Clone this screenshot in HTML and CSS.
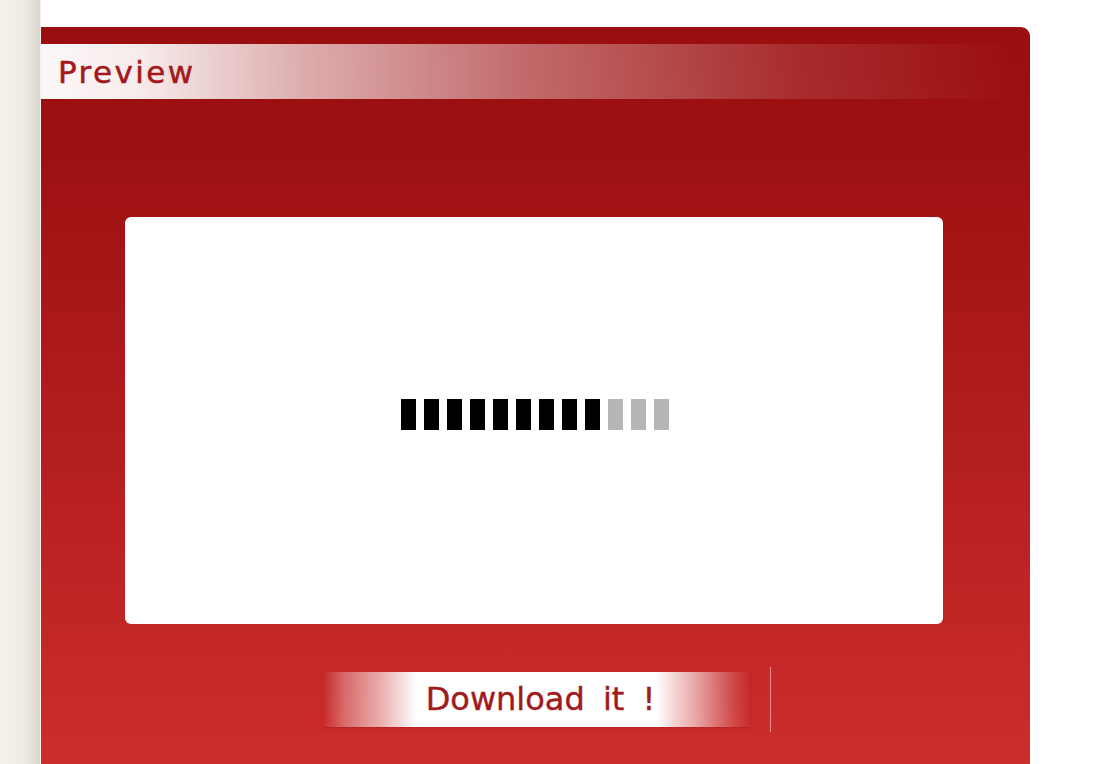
FILE: index.html
```html
<!DOCTYPE html>
<html lang="en">
<head>
<meta charset="UTF-8">
<meta name="viewport" content="width=device-width, initial-scale=1.0">
<title>Preview</title>
<link rel="stylesheet" href="styles.css">
</head>
<body>
<div class="side"></div>
<div class="panel">
  <div class="panel-title">Preview</div>

  <div class="preview-box">
    <div class="loader">
      <span class="on"></span><span class="on"></span><span class="on"></span>
      <span class="on"></span><span class="on"></span><span class="on"></span>
      <span class="on"></span><span class="on"></span><span class="on"></span>
      <span></span><span></span><span></span>
    </div>
  </div>

  <div class="download-row">
    <a class="download" href="#">Download it !</a>
    <span class="divider"></span>
  </div>
</div>
</body>
</html>
```

FILE: styles.css
```css
html, body { margin: 0; padding: 0; height: 764px; overflow: hidden; }
body {
  display: flex;
  background: #fff;
  font-family: "DejaVu Sans", "Liberation Sans", sans-serif;
}
.side {
  width: 40px;
  height: 764px;
  background: linear-gradient(to right, #f3f1ea, #eeebe3 60%, #d9d6ce);
  border-right: 1px solid #f4f2ee;
}
.panel {
  width: 989px;
  height: 737px;
  margin-top: 27px;
  border-top-right-radius: 9px;
  background: linear-gradient(#9b0e0f 0%, #9e1112 18%, #b31d1e 55%, #cc2d2d 100%);
}
.panel-title {
  margin-top: 17px;
  width: 969px;
  height: 55px;
  line-height: 57px;
  padding-left: 17px;
  box-sizing: border-box;
  color: #a3181c;
  font-size: 31px;
  letter-spacing: 2.4px;
  -webkit-text-stroke: 0.5px #a3181c;
  background: linear-gradient(to right, rgba(255,255,255,.97), rgba(255,255,255,.92) 10%, rgba(255,255,255,.66) 27%, rgba(255,255,255,.38) 50%, rgba(255,255,255,.12) 78%, rgba(255,255,255,.02) 97%, rgba(255,255,255,0));
}
.preview-box {
  margin: 118px 0 0 84px;
  width: 818px;
  height: 407px;
  background: #fff;
  border-radius: 6px;
  display: flex;
  align-items: center;
  justify-content: center;
  box-sizing: border-box;
  padding: 0 0 12px 1px;
}
.loader { display: flex; gap: 8px; }
.loader span {
  width: 15px;
  height: 31px;
  background: #b6b6b6;
}
.loader span.on { background: #000; }
.download-row {
  display: flex;
  align-items: center;
  margin-top: 43px;
  padding-left: 282px;
}
.download {
  width: 427px;
  height: 55px;
  line-height: 55px;
  text-align: center;
  padding-left: 8px;
  box-sizing: border-box;
  color: #a01a1e;
  font-size: 32px;
  word-spacing: 8px;
  -webkit-text-stroke: 0.4px #a01a1e;
  text-decoration: none;
  background: linear-gradient(to right, rgba(255,255,255,0), rgba(255,255,255,.3) 5%, rgba(255,255,255,.6) 13%, #fff 22%, #fff 78%, rgba(255,255,255,.55) 88%, rgba(255,255,255,.15) 96%, rgba(255,255,255,0));
  box-shadow: 0 1px 2px rgba(140,20,20,.35);
}
.divider {
  width: 1px;
  height: 65px;
  margin-left: 20px;
  background: #ec8a8a;
}
```
